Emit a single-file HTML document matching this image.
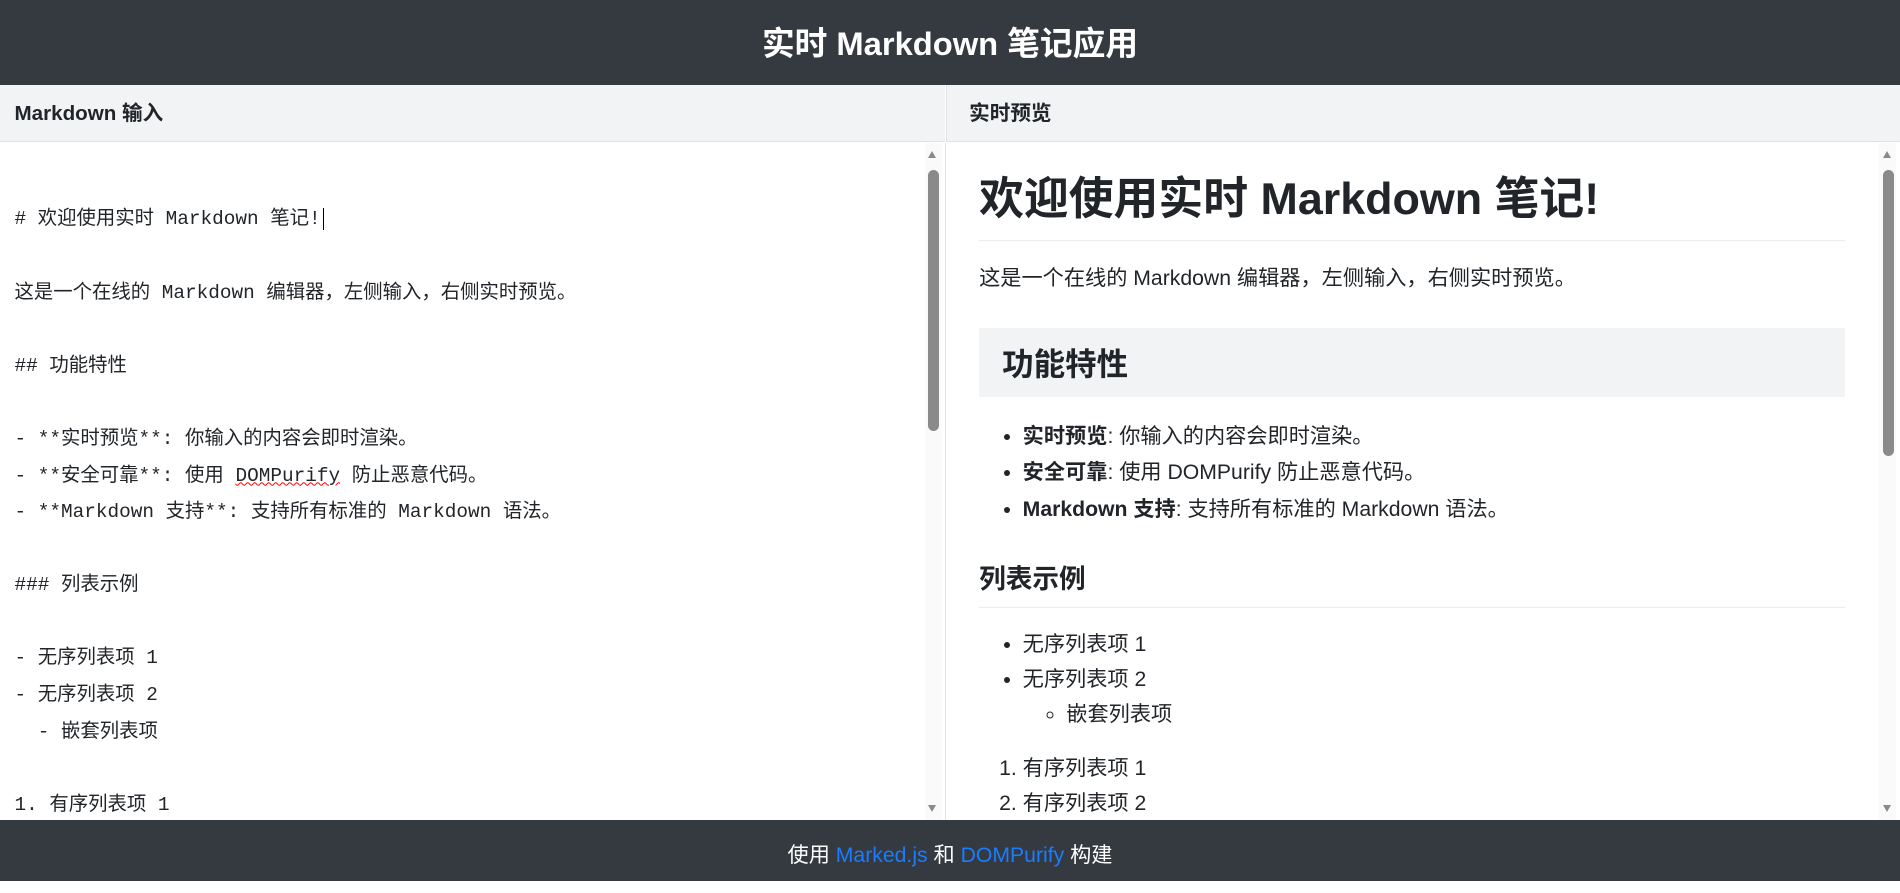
<!DOCTYPE html>
<html><head><meta charset="utf-8"><style>
html,body{margin:0;padding:0}
body{width:1568px;height:727px;zoom:1.21173;overflow:hidden;font-family:"Liberation Sans","Noto Sans CJK SC",sans-serif;color:#212529;background:#fff;position:relative}
.hd{position:absolute;left:0;top:0;width:1568px;height:70px;background:#343a40;color:#fff;font-size:27px;font-weight:bold;text-align:center;line-height:72px}
.bar{position:absolute;top:70px;height:47px;background:#f1f3f5;border-bottom:1px solid #dee2e6;font-size:17px;font-weight:bold;line-height:48px}
.p{position:absolute;top:118px;height:559px;overflow:hidden}
.ed{font-family:"Liberation Mono","Noto Sans CJK SC",monospace;font-size:16px;line-height:30.2px;white-space:pre;padding:18px 12px;margin:0}
.sb{position:absolute;top:0;width:14px;height:559px;background:#fafafa}
.th{position:absolute;left:3px;width:9px;background:#8a8a8a;border-radius:5px}
.up,.dn{position:absolute;left:3px;width:0;height:0;border-left:4px solid transparent;border-right:4px solid transparent}
.up{top:7px;border-bottom:6px solid #8a8a8a}.dn{bottom:7px;border-top:6px solid #8a8a8a}
.pv{padding:0 45px 0 27px;font-size:17.5px;line-height:30px}
h1{font-size:37px;margin:24px 0 0;line-height:44px;padding-bottom:12px;border-bottom:1px solid #eaecef}
.pv p{margin:17px 0 0}
h2{font-size:26px;margin:25px 0 0;background:#f1f3f5;padding:0 19px;line-height:61px;height:57px}
h3{font-size:22px;margin:27px 0 0;line-height:30px;padding-bottom:8px;border-bottom:1px solid #eaecef}
ul,ol{margin:10px 0 0;padding-left:36px}
ul ul{margin:0;list-style:circle}
li{line-height:28.8px}
ul.f li{line-height:30px}
.ft{position:absolute;left:0;top:677px;width:1568px;height:50px;background:#343a40;color:#fff;font-size:17.5px;text-align:center;line-height:60px}
.ft a{color:#1a7cff;text-decoration:none}
.sq{text-decoration:underline wavy red;text-decoration-thickness:1px}
</style></head><body>
<div class="hd">实时 Markdown 笔记应用</div>
<div class="bar" style="left:0;width:780px;padding-left:12px;box-sizing:border-box">Markdown 输入</div>
<div class="bar" style="left:781px;width:787px;padding-left:18px;box-sizing:border-box;border-left:1px solid #dee2e6">实时预览</div>
<div class="p" style="left:0;width:780px">
<div class="ed">
# 欢迎使用实时 Markdown 笔记!<span style="border-left:1px solid #000;margin-left:2px"></span>

这是一个在线的 Markdown 编辑器，左侧输入，右侧实时预览。

## 功能特性

- **实时预览**: 你输入的内容会即时渲染。
- **安全可靠**: 使用 <span class="sq">DOMPurify</span> 防止恶意代码。
- **Markdown 支持**: 支持所有标准的 Markdown 语法。

### 列表示例

- 无序列表项 1
- 无序列表项 2
  - 嵌套列表项

1. 有序列表项 1</div>
<div class="sb" style="left:763px"><div class="up"></div><div class="th" style="top:22px;height:216px"></div><div class="dn"></div></div>
</div>
<div style="position:absolute;left:780px;top:118px;width:1px;height:559px;background:#dee2e6"></div>
<div class="p" style="left:781px;width:787px">
<div class="pv">
<h1>欢迎使用实时 Markdown 笔记!</h1>
<p>这是一个在线的 Markdown 编辑器，左侧输入，右侧实时预览。</p>
<h2>功能特性</h2>
<ul class="f" style="margin-top:18px">
<li><b>实时预览</b>: 你输入的内容会即时渲染。</li>
<li><b>安全可靠</b>: 使用 DOMPurify 防止恶意代码。</li>
<li><b>Markdown 支持</b>: 支持所有标准的 Markdown 语法。</li>
</ul>
<h3>列表示例</h3>
<ul style="margin-top:17px">
<li>无序列表项 1</li>
<li>无序列表项 2
<ul><li>嵌套列表项</li></ul></li>
</ul>
<ol style="margin-top:16px;padding-left:36px">
<li>有序列表项 1</li>
<li>有序列表项 2</li>
</ol>
</div>
<div class="sb" style="left:770px"><div class="up"></div><div class="th" style="top:22px;height:236px"></div><div class="dn"></div></div>
</div>
<div class="ft">使用 <a>Marked.js</a> 和 <a>DOMPurify</a> 构建</div>
</body></html>
